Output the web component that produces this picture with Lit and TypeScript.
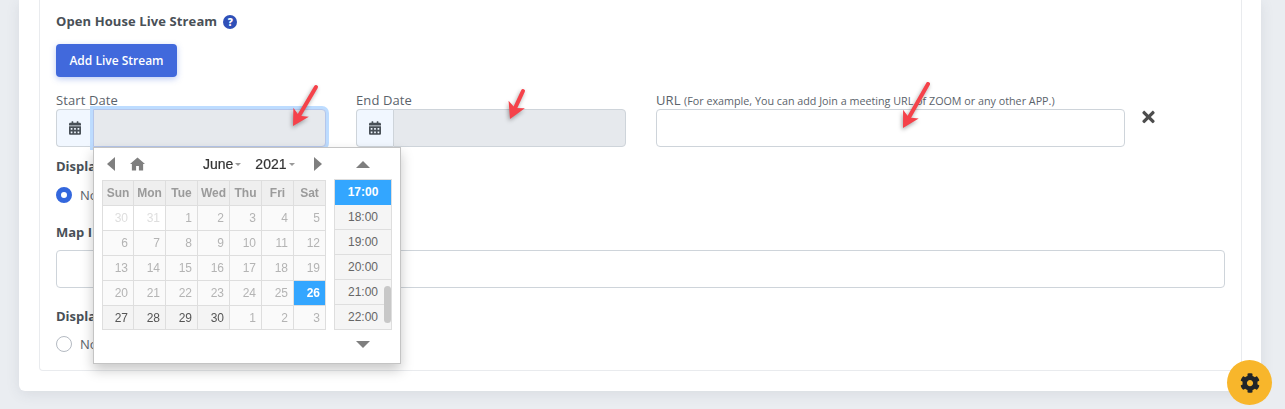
import { LitElement, html, css, svg } from 'lit';
import { customElement } from 'lit/decorators.js';

const calendarIcon = html`<svg class="cal-icon" viewBox="0 0 448 512"><path fill="currentColor" d="M0 464c0 26.5 21.5 48 48 48h352c26.5 0 48-21.5 48-48V192H0v272zm320-196c0-6.6 5.4-12 12-12h40c6.6 0 12 5.4 12 12v40c0 6.6-5.4 12-12 12h-40c-6.6 0-12-5.4-12-12v-40zm0 128c0-6.6 5.4-12 12-12h40c6.6 0 12 5.4 12 12v40c0 6.6-5.4 12-12 12h-40c-6.6 0-12-5.4-12-12v-40zM192 268c0-6.6 5.4-12 12-12h40c6.6 0 12 5.4 12 12v40c0 6.6-5.4 12-12 12h-40c-6.6 0-12-5.4-12-12v-40zm0 128c0-6.6 5.4-12 12-12h40c6.6 0 12 5.4 12 12v40c0 6.6-5.4 12-12 12h-40c-6.6 0-12-5.4-12-12v-40zM64 268c0-6.6 5.4-12 12-12h40c6.6 0 12 5.4 12 12v40c0 6.6-5.4 12-12 12H76c-6.6 0-12-5.4-12-12v-40zm0 128c0-6.6 5.4-12 12-12h40c6.6 0 12 5.4 12 12v40c0 6.6-5.4 12-12 12H76c-6.6 0-12-5.4-12-12v-40zM400 64h-48V16c0-8.8-7.2-16-16-16h-32c-8.8 0-16 7.2-16 16v48H160V16c0-8.8-7.2-16-16-16h-32c-8.8 0-16 7.2-16 16v48H48C21.5 64 0 85.5 0 112v48h448v-48c0-26.5-21.5-48-48-48z"/></svg>`;

const gearPath = 'M487.4 315.7l-42.6-24.6c4.3-23.2 4.3-47 0-70.2l42.6-24.6c4.9-2.8 7.1-8.6 5.5-14-11.1-35.6-30-67.8-54.7-94.6-3.8-4.1-10-5.1-14.8-2.3L380.8 110c-17.9-15.4-38.5-27.3-60.8-35.1V25.8c0-5.6-3.9-10.5-9.4-11.7-36.7-8.2-74.3-7.8-109.2 0-5.5 1.2-9.4 6.1-9.4 11.7V75c-22.2 7.9-42.8 19.8-60.8 35.1L88.7 85.5c-4.9-2.8-11-1.9-14.8 2.3-24.7 26.7-43.6 58.9-54.7 94.6-1.7 5.4.6 11.2 5.5 14L67.3 221c-4.3 23.2-4.3 47 0 70.2l-42.6 24.6c-4.9 2.8-7.1 8.6-5.5 14 11.1 35.6 30 67.8 54.7 94.6 3.8 4.1 10 5.1 14.8 2.3l42.6-24.6c17.9 15.4 38.5 27.3 60.8 35.1v49.2c0 5.6 3.9 10.5 9.4 11.7 36.7 8.2 74.3 7.8 109.2 0 5.5-1.2 9.4-6.1 9.4-11.7v-49.2c22.2-7.9 42.8-19.8 60.8-35.1l42.6 24.6c4.9 2.8 11 1.9 14.8-2.3 24.7-26.7 43.6-58.9 54.7-94.6 1.5-5.5-.7-11.3-5.6-14.1zM256 336c-44.1 0-80-35.9-80-80s35.9-80 80-80 80 35.9 80 80-35.9 80-80 80z';

const timesPath = 'M242.72 256l100.07-100.07c12.28-12.28 12.28-32.19 0-44.48l-22.24-22.24c-12.28-12.28-32.19-12.28-44.48 0L176 189.28 75.93 89.21c-12.28-12.28-32.19-12.28-44.48 0L9.21 111.45c-12.28 12.28-12.28 32.19 0 44.48L109.28 256 9.21 356.07c-12.28 12.28-12.28 32.19 0 44.48l22.24 22.24c12.28 12.28 32.2 12.28 44.48 0L176 322.72l100.07 100.07c12.28 12.28 32.2 12.28 44.48 0l22.24-22.24c12.28-12.28 12.28-32.19 0-44.48L242.72 256z';

// day number, state: o = other month faded, d = disabled, e = enabled, s = selected
const weeks: [number, string][][] = [
    [[30, 'o'], [31, 'o'], [1, 'd'], [2, 'd'], [3, 'd'], [4, 'd'], [5, 'd']],
    [[6, 'd'], [7, 'd'], [8, 'd'], [9, 'd'], [10, 'd'], [11, 'd'], [12, 'd']],
    [[13, 'd'], [14, 'd'], [15, 'd'], [16, 'd'], [17, 'd'], [18, 'd'], [19, 'd']],
    [[20, 'd'], [21, 'd'], [22, 'd'], [23, 'd'], [24, 'd'], [25, 'd'], [26, 's']],
    [[27, 'e'], [28, 'e'], [29, 'e'], [30, 'e'], [1, 'd'], [2, 'd'], [3, 'd']],
];
const dayNames = ['Sun', 'Mon', 'Tue', 'Wed', 'Thu', 'Fri', 'Sat'];
const times = ['17:00', '18:00', '19:00', '20:00', '21:00', '22:00'];

// tail and tip of the red annotation arrows, in page coordinates
const arrows = [
    { x1: 316, y1: 87, x2: 293, y2: 126 },
    { x1: 523, y1: 91, x2: 510, y2: 119 },
    { x1: 928, y1: 84, x2: 903, y2: 128 },
];

function arrowShape(a: { x1: number; y1: number; x2: number; y2: number }) {
    const dx = a.x2 - a.x1;
    const dy = a.y2 - a.y1;
    const len = Math.hypot(dx, dy);
    const ux = dx / len;
    const uy = dy / len;
    const bx = a.x2 - ux * 16;
    const by = a.y2 - uy * 16;
    const nx = a.x2 - ux * 12;
    const ny = a.y2 - uy * 12;
    const points = `${a.x2},${a.y2} ${bx - uy * 9},${by + ux * 9} ${nx},${ny} ${bx + uy * 9},${by - ux * 9}`;
    return svg`
        <line x1=${a.x1} y1=${a.y1} x2=${nx} y2=${ny} stroke="#f5424a" stroke-width="4" stroke-linecap="round"></line>
        <polygon points=${points} fill="#f5424a"></polygon>
    `;
}

@customElement('app-root')
export class AppRoot extends LitElement {
    static styles = css`
        :host {
            display: block;
            position: relative;
            height: 409px;
            overflow: hidden;
            background: #eaedf1;
            font-family: "Open Sans", "Liberation Sans", sans-serif;
            color: #495057;
        }

        .card {
            box-sizing: border-box;
            margin-left: 19px;
            width: 1242px;
            height: 391px;
            padding: 0 19px 0 20px;
            background: #fff;
            border-radius: 0 0 6px 6px;
            box-shadow: 0 3px 14px rgba(60, 70, 90, 0.1);
        }

        .inner {
            box-sizing: border-box;
            height: 371px;
            padding: 12px 16px 0 16px;
            border: 1px solid #e9ebee;
            border-top: 0;
            border-radius: 0 0 4px 4px;
        }

        .title {
            display: flex;
            align-items: center;
            gap: 6px;
            height: 18px;
            font-size: 13px;
            font-weight: 700;
            letter-spacing: 0.1px;
            color: #495057;
        }

        .help {
            display: flex;
            align-items: center;
            justify-content: center;
            width: 14px;
            height: 14px;
            border-radius: 50%;
            background: #2f50b8;
            color: #fff;
            font-size: 10px;
            font-weight: 800;
            margin-top: 2px;
        }

        .add-btn {
            display: block;
            box-sizing: border-box;
            width: 121px;
            height: 33px;
            margin-top: 14px;
            border: 0;
            border-radius: 4px;
            background: #4169dc;
            color: #fff;
            font-family: inherit;
            font-size: 12px;
            font-weight: 600;
            box-shadow: 0 2px 6px rgba(65, 105, 220, 0.35);
        }

        .date-row {
            display: flex;
            margin-top: 14px;
        }

        .field { width: 270px; margin-right: 30px; }
        .field.url { width: 469px; margin-right: 17px; }

        .field label {
            display: block;
            height: 18px;
            line-height: 18px;
            font-size: 13px;
            letter-spacing: 0.1px;
            color: #5b636b;
        }

        .field small { font-size: 10.75px; letter-spacing: 0; }

        .group {
            display: flex;
            height: 38px;
        }

        .addon {
            box-sizing: border-box;
            display: flex;
            align-items: center;
            justify-content: center;
            width: 37px;
            background: #f1f7ff;
            border: 1px solid #ced4da;
            border-right: 0;
            border-radius: 4px 0 0 4px;
            color: #495057;
        }

        .cal-icon { width: 12px; height: 14px; }

        .control {
            box-sizing: border-box;
            flex: 1;
            height: 38px;
            border: 1px solid #ced4da;
            border-radius: 0 4px 4px 0;
            background: #e6e9ed;
        }

        .control.focus {
            border-color: #b5c6ea;
            box-shadow: 0 0 0 3px #bddcff;
        }

        .control.plain {
            background: #fff;
            border-radius: 4px;
        }

        .remove {
            width: 13px;
            height: 18px;
            margin-top: 17px;
            fill: #4d4d4d;
        }

        .section {
            height: 18px;
            line-height: 18px;
            font-size: 13px;
            font-weight: 700;
            color: #495057;
        }

        .radio {
            display: flex;
            align-items: center;
            gap: 8px;
            height: 16px;
            font-size: 13px;
            color: #5b636b;
        }

        .dot {
            box-sizing: border-box;
            width: 16px;
            height: 16px;
            border-radius: 50%;
            border: 1px solid #b4bac2;
            background: #fff;
        }

        .dot.on { border: 5px solid #3367dd; }

        .s1 { margin-top: 10px; }
        .r1 { margin-top: 12px; }
        .s2 { margin-top: 20px; }
        .map-input { margin-top: 9px; }
        .s3 { margin-top: 19px; }
        .r2 { margin-top: 11px; }

        .picker {
            position: absolute;
            left: 93px;
            top: 147px;
            box-sizing: border-box;
            width: 308px;
            height: 217px;
            padding: 0 8px 0 8px;
            display: flex;
            background: #fff;
            border: 1px solid #c4c4c4;
            box-shadow: 0 6px 12px rgba(0, 0, 0, 0.22);
            font-family: "Liberation Sans", Arial, sans-serif;
            font-size: 12px;
            will-change: opacity;
        }

        .cal { width: 224px; }

        .nav {
            display: flex;
            align-items: center;
            height: 32px;
            color: #333;
        }

        .tri-l, .tri-r { width: 0; height: 0; border-style: solid; }
        .tri-l { margin-left: 5px; border-width: 7px 8px 7px 0; border-color: transparent #7f7f7f transparent transparent; }
        .tri-r { margin-left: 19px; border-width: 7px 0 7px 8px; border-color: transparent transparent transparent #7f7f7f; }
        .home { width: 15px; height: 14px; margin-left: 15px; fill: #7f7f7f; }

        .month {
            display: flex;
            align-items: center;
            gap: 2px;
            font-size: 14px;
            -webkit-text-stroke: 0.2px #333;
        }

        .month::after {
            content: "";
            border-style: solid;
            border-width: 3px 3px 0 3px;
            border-color: #999 transparent transparent transparent;
        }

        .month.m { margin-left: 58px; }
        .month.y { margin-left: 14px; }

        .grid {
            display: grid;
            grid-template-columns: repeat(7, 32px);
            grid-auto-rows: 25px;
        }

        .cell {
            box-sizing: border-box;
            line-height: 24px;
            padding-right: 5px;
            text-align: right;
            border: 1px solid #dedede;
            border-width: 1px 1px 0 0;
            background: #fafafa;
            color: #b4b4b4;
        }

        .cell:nth-child(7n + 1) { border-left: 1px solid #dedede; }
        .cell.last { border-bottom: 1px solid #dedede; }

        .cell.head {
            padding: 0;
            text-align: center;
            background: #efefef;
            color: #9b9b9b;
            font-weight: 700;
        }

        .cell.o { color: #dedede; background: #fff; }
        .cell.e { color: #555; background: #f4f4f4; }
        .cell.s { background: #33a6ff; color: #fff; font-weight: 700; }

        .clock { width: 58px; margin-left: 8px; }

        .up, .down {
            width: 0;
            height: 0;
            margin: 0 auto;
            border-style: solid;
            border-color: transparent;
        }

        .up { margin-top: 13px; border-width: 0 7px 7px 7px; border-bottom-color: #7f7f7f; }
        .down { margin-top: 11px; border-width: 7px 7px 0 7px; border-top-color: #7f7f7f; }

        .times {
            position: relative;
            box-sizing: border-box;
            height: 151px;
            margin-top: 11px;
            border: 1px solid #dedede;
            overflow: hidden;
        }

        .time {
            box-sizing: border-box;
            height: 25px;
            line-height: 24px;
            text-align: center;
            color: #666;
            background: #f5f5f5;
            border-bottom: 1px solid #dedede;
        }

        .time.active {
            background: #33a6ff;
            color: #fff;
            font-weight: 700;
            border-bottom: 0;
        }

        .thumb {
            position: absolute;
            right: 0;
            top: 106px;
            width: 7px;
            height: 37px;
            border-radius: 4px;
            background: #c8c8c8;
        }

        .arrows {
            position: absolute;
            left: 0;
            top: 0;
            width: 1285px;
            height: 409px;
            pointer-events: none;
            filter: drop-shadow(-1px 2px 2px rgba(0, 0, 0, 0.35));
        }

        .fab {
            position: absolute;
            left: 1227px;
            top: 360px;
            width: 45px;
            height: 45px;
            display: flex;
            align-items: center;
            justify-content: center;
            border-radius: 50%;
            background: #f8b62b;
        }

        .fab svg { width: 20px; height: 20px; fill: #212529; }
    `;

    render() {
        return html`
            <div class="card">
                <div class="inner">
                    <div class="title">Open House Live Stream <span class="help">?</span></div>
                    <button class="add-btn">Add Live Stream</button>
                    <div class="date-row">
                        <div class="field">
                            <label>Start Date</label>
                            <div class="group">
                                <span class="addon">${calendarIcon}</span>
                                <div class="control focus"></div>
                            </div>
                        </div>
                        <div class="field">
                            <label>End Date</label>
                            <div class="group">
                                <span class="addon">${calendarIcon}</span>
                                <div class="control"></div>
                            </div>
                        </div>
                        <div class="field url">
                            <label>URL <small>(For example, You can add Join a meeting URL of ZOOM or any other APP.)</small></label>
                            <div class="group">
                                <div class="control plain"></div>
                            </div>
                        </div>
                        <svg class="remove" viewBox="0 0 352 512"><path d=${timesPath}></path></svg>
                    </div>
                    <div class="section s1">Display</div>
                    <div class="radio r1"><span class="dot on"></span>No</div>
                    <div class="section s2">Map I</div>
                    <div class="control plain map-input"></div>
                    <div class="section s3">Display</div>
                    <div class="radio r2"><span class="dot"></span>No</div>
                </div>
            </div>

            <div class="picker">
                <div class="cal">
                    <div class="nav">
                        <span class="tri-l"></span>
                        <svg class="home" viewBox="0 0 16 14"><path d="M8 0 L16 7 L14 7 L14 14 L9.5 14 L9.5 9 L6.5 9 L6.5 14 L2 14 L2 7 L0 7 Z"></path></svg>
                        <span class="month m">June</span>
                        <span class="month y">2021</span>
                        <span class="tri-r"></span>
                    </div>
                    <div class="grid">
                        ${dayNames.map(d => html`<div class="cell head">${d}</div>`)}
                        ${weeks.map((week, w) => week.map(([n, state]) => html`
                            <div class="cell ${state} ${w === weeks.length - 1 ? 'last' : ''}">${n}</div>
                        `))}
                    </div>
                </div>
                <div class="clock">
                    <div class="up"></div>
                    <div class="times">
                        ${times.map((t, i) => html`<div class="time ${i === 0 ? 'active' : ''}">${t}</div>`)}
                        <div class="thumb"></div>
                    </div>
                    <div class="down"></div>
                </div>
            </div>

            <svg class="arrows" viewBox="0 0 1285 409">${arrows.map(arrowShape)}</svg>

            <div class="fab"><svg viewBox="0 0 512 512"><path d=${gearPath}></path></svg></div>
        `;
    }
}

declare global {
    interface HTMLElementTagNameMap {
        'app-root': AppRoot;
    }
}
